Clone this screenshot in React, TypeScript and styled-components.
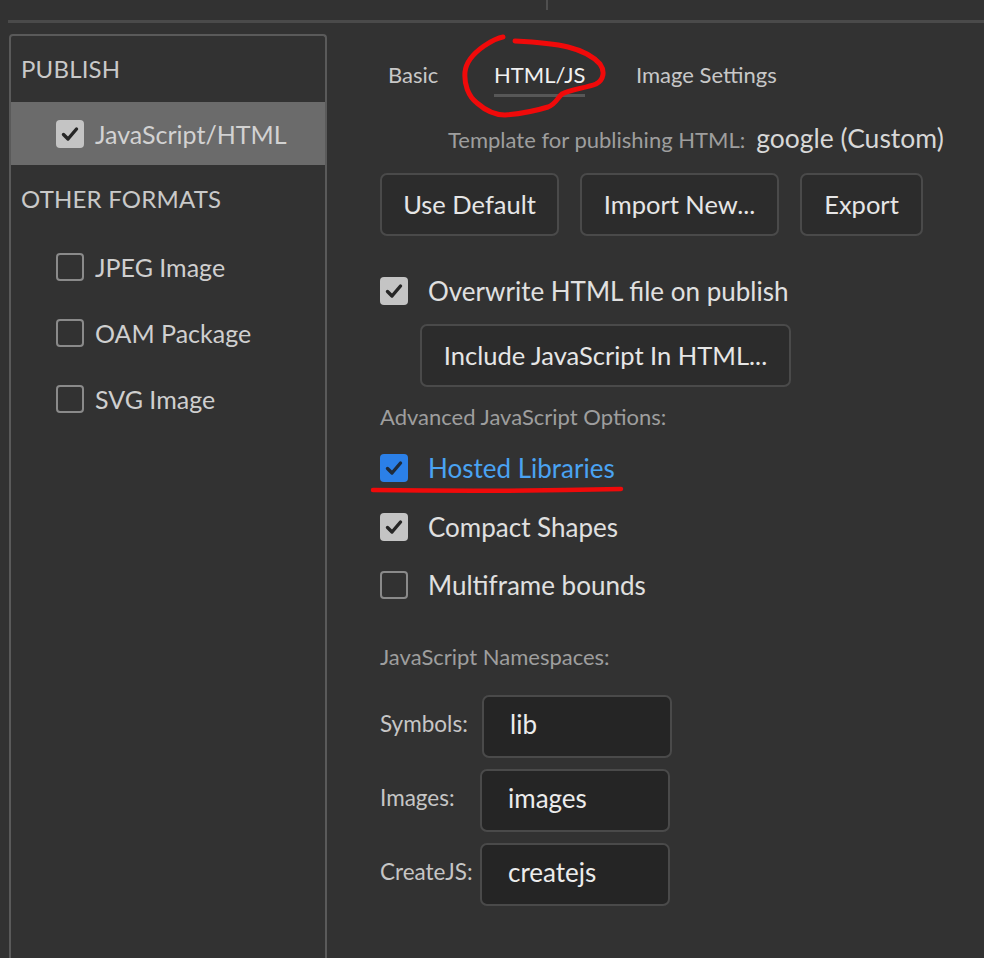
import React from "react";
import styled, { createGlobalStyle } from "styled-components";

const GlobalStyle = createGlobalStyle`
  html, body {
    margin: 0;
    padding: 0;
    background: #323232;
  }
  body {
    font-family: Lato, "Open Sans", sans-serif;
    color: #d6d6d6;
  }
`;

const Page = styled.div`
  position: relative;
  width: 984px;
  height: 958px;
  overflow: hidden;
  background: #323232;
`;

const TopStrip = styled.div`
  height: 20px;
  display: flex;
  padding-left: 546px;
`;

const Tick = styled.div`
  width: 2px;
  height: 10px;
  background: #4f4f4f;
`;

const Rule = styled.div`
  height: 3px;
  margin-left: 8px;
  background: #4a4a4a;
`;

const Body = styled.div`
  display: flex;
  padding-top: 11px;
`;

const Sidebar = styled.div`
  width: 314px;
  height: 940px;
  margin-left: 9px;
  border: 2px solid #5a5a5a;
  border-bottom: none;
  border-radius: 4px 4px 0 0;
  flex-shrink: 0;
`;

const SideHeading = styled.div<{ h: number }>`
  height: ${p => p.h}px;
  display: flex;
  align-items: center;
  padding-left: 10px;
  padding-bottom: 2px;
  box-sizing: border-box;
  font-size: 24px;
  color: #c9c9c9;
  letter-spacing: 0.2px;
`;

const SideItem = styled.div<{ selected?: boolean; h: number }>`
  height: ${p => p.h}px;
  display: flex;
  align-items: center;
  gap: 11px;
  padding-left: 45px;
  font-size: 25px;
  color: ${p => (p.selected ? "#d2d2d2" : "#cfcfcf")};
  background: ${p => (p.selected ? "#6b6b6b" : "transparent")};
`;

const Box = styled.span<{ checked?: boolean; blue?: boolean }>`
  width: 28px;
  height: 28px;
  box-sizing: border-box;
  border-radius: 4px;
  flex-shrink: 0;
  display: flex;
  align-items: center;
  justify-content: center;
  background: ${p => (p.blue ? "#2b80e8" : p.checked ? "#c4c4c4" : "transparent")};
  border: ${p => (p.checked ? "none" : "2.5px solid #8a8a8a")};
`;

const Main = styled.div`
  flex: 1;
  padding-left: 53px;
  display: flex;
  flex-direction: column;
`;

const Tabs = styled.div`
  display: grid;
  grid-template-columns: 106px 142px auto;
  padding-left: 8px;
  margin-top: 25px;
  height: 62px;
`;

const TabCell = styled.div`
  display: flex;
  align-items: flex-start;
`;

const Tab = styled.div<{ active?: boolean }>`
  font-size: 22px;
  color: ${p => (p.active ? "#f0f0f0" : "#c8c8c8")};
  height: 33px;
  padding-top: 2px;
  border-bottom: 3px solid ${p => (p.active ? "#575757" : "transparent")};
`;

const TemplateLine = styled.div`
  display: flex;
  align-items: baseline;
  gap: 11px;
  padding-left: 68px;
  margin-top: 1px;
  height: 44px;
`;

const Muted = styled.span`
  font-size: 22px;
  color: #9e9e9e;
`;

const TemplateValue = styled.span`
  font-size: 26.5px;
  color: #d8d8d8;
`;

const ButtonRow = styled.div`
  display: flex;
  gap: 21px;
  margin-top: 7px;
`;

const Button = styled.div<{ w: number }>`
  width: ${p => p.w}px;
  height: 63px;
  box-sizing: border-box;
  border: 2px solid #4a4a4a;
  border-radius: 7px;
  background: #2c2c2c;
  display: flex;
  align-items: center;
  justify-content: center;
  padding-bottom: 2px;
  font-size: 25.5px;
  color: #e6e6e6;
`;

const CheckRow = styled.div<{ top: number; blue?: boolean }>`
  display: flex;
  align-items: center;
  gap: 20px;
  height: 30px;
  margin-top: ${p => p.top}px;
  font-size: 26px;
  color: ${p => (p.blue ? "#4aa3f2" : "#e0e0e0")};
`;

const Indented = styled.div`
  padding-left: 40px;
  margin-top: 18px;
`;

const SectionLabel = styled.div<{ top: number }>`
  margin-top: ${p => p.top}px;
  font-size: 22px;
  color: #9e9e9e;
  height: 28px;
  display: flex;
  align-items: center;
`;

const FieldRow = styled.div<{ top: number; offset: number }>`
  display: grid;
  grid-template-columns: ${p => p.offset}px 190px;
  align-items: center;
  margin-top: ${p => p.top}px;
`;

const FieldLabel = styled.span`
  font-size: 22.5px;
  color: #c6c6c6;
  padding-bottom: 6px;
`;

const Field = styled.div`
  height: 63px;
  box-sizing: border-box;
  border: 2px solid #4a4a4a;
  border-radius: 7px;
  background: #252525;
  display: flex;
  align-items: center;
  padding-left: 26px;
  padding-bottom: 6px;
  font-size: 26px;
  color: #ececec;
`;

const Ink = styled.svg`
  position: absolute;
  left: 0;
  top: 0;
  pointer-events: none;
`;

const Check = ({ dark = "#262626" }: { dark?: string }) => (
  <svg width="20" height="20" viewBox="0 0 20 20">
    <path d="M3.5 10.5 L8 15 L16.5 5" fill="none" stroke={dark} strokeWidth="3.4" strokeLinecap="round" strokeLinejoin="round" />
  </svg>
);

const CheckBox = ({ checked, blue }: { checked?: boolean; blue?: boolean }) => (
  <Box checked={checked || blue} blue={blue}>
    {(checked || blue) && <Check dark={blue ? "#1f2b3a" : "#262626"} />}
  </Box>
);

export default function App() {
  return (
    <Page>
      <GlobalStyle />
      <TopStrip>
        <Tick />
      </TopStrip>
      <Rule />
      <Body>
        <Sidebar>
          <SideHeading h={66}>PUBLISH</SideHeading>
          <SideItem selected h={63}>
            <CheckBox checked />
            JavaScript/HTML
          </SideItem>
          <SideHeading h={69}>OTHER FORMATS</SideHeading>
          <SideItem h={66}>
            <CheckBox />
            JPEG Image
          </SideItem>
          <SideItem h={66}>
            <CheckBox />
            OAM Package
          </SideItem>
          <SideItem h={66}>
            <CheckBox />
            SVG Image
          </SideItem>
        </Sidebar>
        <Main>
          <Tabs>
            <TabCell>
              <Tab>Basic</Tab>
            </TabCell>
            <TabCell>
              <Tab active>HTML/JS</Tab>
            </TabCell>
            <TabCell>
              <Tab>Image Settings</Tab>
            </TabCell>
          </Tabs>
          <TemplateLine>
            <Muted>Template for publishing HTML:</Muted>
            <TemplateValue>google (Custom)</TemplateValue>
          </TemplateLine>
          <ButtonRow>
            <Button w={179}>Use Default</Button>
            <Button w={199}>Import New...</Button>
            <Button w={123}>Export</Button>
          </ButtonRow>
          <CheckRow top={40}>
            <CheckBox checked />
            Overwrite HTML file on publish
          </CheckRow>
          <Indented>
            <Button w={371}>Include JavaScript In HTML...</Button>
          </Indented>
          <SectionLabel top={15}>Advanced JavaScript Options:</SectionLabel>
          <CheckRow top={23} blue>
            <CheckBox blue />
            Hosted Libraries
          </CheckRow>
          <CheckRow top={29}>
            <CheckBox checked />
            Compact Shapes
          </CheckRow>
          <CheckRow top={28}>
            <CheckBox />
            Multiframe bounds
          </CheckRow>
          <SectionLabel top={42}>JavaScript Namespaces:</SectionLabel>
          <FieldRow top={25} offset={102}>
            <FieldLabel>Symbols:</FieldLabel>
            <Field>lib</Field>
          </FieldRow>
          <FieldRow top={11} offset={100}>
            <FieldLabel>Images:</FieldLabel>
            <Field>images</Field>
          </FieldRow>
          <FieldRow top={11} offset={100}>
            <FieldLabel>CreateJS:</FieldLabel>
            <Field>createjs</Field>
          </FieldRow>
        </Main>
      </Body>
      <Ink width="984" height="958" viewBox="0 0 984 958">
        <path
          d="M503 37 C496 38 490 42 484 46 C474 53 466 62 465 72 C464 84 468 96 477 103 C485 110 495 115 505 115 C518 114 535 111 548 107 C556 104 558 97 562 94 C572 89 586 88 596 84 C604 80 605 71 600 64 C592 55 580 50 568 47 C552 43 535 42 515 41"
          fill="none"
          stroke="#f00a0a"
          strokeWidth="5"
          strokeLinecap="round"
        />
        <path d="M373 490 C440 491 540 491 621 489" fill="none" stroke="#f00a0a" strokeWidth="4.5" strokeLinecap="round" />
      </Ink>
    </Page>
  );
}
